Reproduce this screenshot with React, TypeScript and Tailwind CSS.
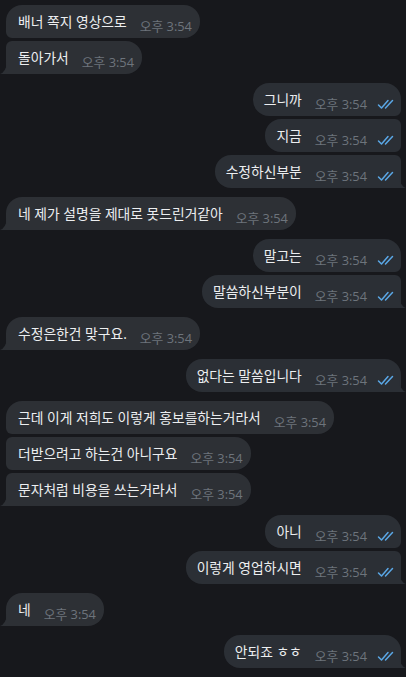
import React from "react";

type Pos = "single" | "first" | "middle" | "last";
type Msg = { out: boolean; text: string; pos: Pos };

const GROUPS: { out: boolean; texts: string[] }[] = [
  { out: false, texts: ["배너 쪽지 영상으로", "돌아가서"] },
  { out: true, texts: ["그니까", "지금", "수정하신부분"] },
  { out: false, texts: ["네 제가 설명을 제대로 못드린거같아"] },
  { out: true, texts: ["말고는", "말씀하신부분이"] },
  { out: false, texts: ["수정은한건 맞구요."] },
  { out: true, texts: ["없다는 말씀입니다"] },
  { out: false, texts: ["근데 이게 저희도 이렇게 홍보를하는거라서", "더받으려고 하는건 아니구요", "문자처럼 비용을 쓰는거라서"] },
  { out: true, texts: ["아니", "이렇게 영업하시면"] },
  { out: false, texts: ["네"] },
  { out: true, texts: ["안되죠 ㅎㅎ"] },
];

const FONT = "font-['Open_Sans','Noto_Sans_CJK_KR',sans-serif]";

function Checks() {
  return (
    <svg width="19" height="11" viewBox="0 0 19 11" fill="none" className="shrink-0">
      <path d="M1.5 6 L4.5 9 L11 1.5" stroke="#5aa7e6" strokeWidth="1.5" strokeLinecap="round" strokeLinejoin="round" />
      <path d="M8.5 9 L15.5 1.5" stroke="#5aa7e6" strokeWidth="1.5" strokeLinecap="round" />
    </svg>
  );
}

function Tail({ out }: { out: boolean }) {
  if (out) {
    return (
      <svg width="7" height="12" viewBox="0 0 7 12" className="absolute bottom-0 right-[-5px]">
        <path d="M0 0 Q1 10 7 12 L0 12 Z" fill="#2b2f35" />
      </svg>
    );
  }
  return (
    <svg width="7" height="12" viewBox="0 0 7 12" className="absolute bottom-0 left-[-6px]">
      <path d="M7 0 Q6 10 0 12 L7 12 Z" fill="#2d3035" />
    </svg>
  );
}

function Bubble({ m }: { m: Msg }) {
  const tail = m.pos === "single" || m.pos === "last";
  const topBig = m.pos === "single" || m.pos === "first";
  let radius = "";
  if (m.out) {
    radius = `rounded-l-[16px] ${topBig ? "rounded-tr-[16px]" : "rounded-tr-[6px]"} ${tail ? "rounded-br-none" : "rounded-br-[6px]"}`;
  } else {
    radius = `rounded-r-[16px] ${topBig ? "rounded-tl-[16px]" : "rounded-tl-[6px]"} ${tail ? "rounded-bl-none" : "rounded-bl-[6px]"}`;
  }
  return (
    <div className={`flex ${m.out ? "justify-end pr-[5px]" : "justify-start pl-[6px]"}`}>
      <div
        className={`relative flex h-[33px] items-start ${radius} ${
          m.out ? "bg-[#2b2f35] pl-[11px] pr-[5px]" : "bg-[#2d3035] pl-[12px] pr-[8px]"
        }`}
      >
        <span className="mt-[8px] text-[13.8px] leading-[17px] text-[#eceef0]">{m.text}</span>
        <span className="ml-[13px] mt-[15px] text-[12.8px] leading-[13px] text-[#6d747c]">오후 3:54</span>
        {m.out && (
          <span className="ml-[10px] mt-[16px]">
            <Checks />
          </span>
        )}
        {tail && <Tail out={m.out} />}
      </div>
    </div>
  );
}

export default function App() {
  return (
    <div className={`h-[677px] w-full overflow-hidden bg-[#17181c] pt-[5px] ${FONT}`}>
      <div className="flex flex-col gap-[9px]">
        {GROUPS.map((g, gi) => (
          <div key={gi} className="flex flex-col gap-[3px]">
            {g.texts.map((t, i) => {
              const n = g.texts.length;
              const pos: Pos = n === 1 ? "single" : i === 0 ? "first" : i === n - 1 ? "last" : "middle";
              return <Bubble key={i} m={{ out: g.out, text: t, pos }} />;
            })}
          </div>
        ))}
      </div>
    </div>
  );
}
